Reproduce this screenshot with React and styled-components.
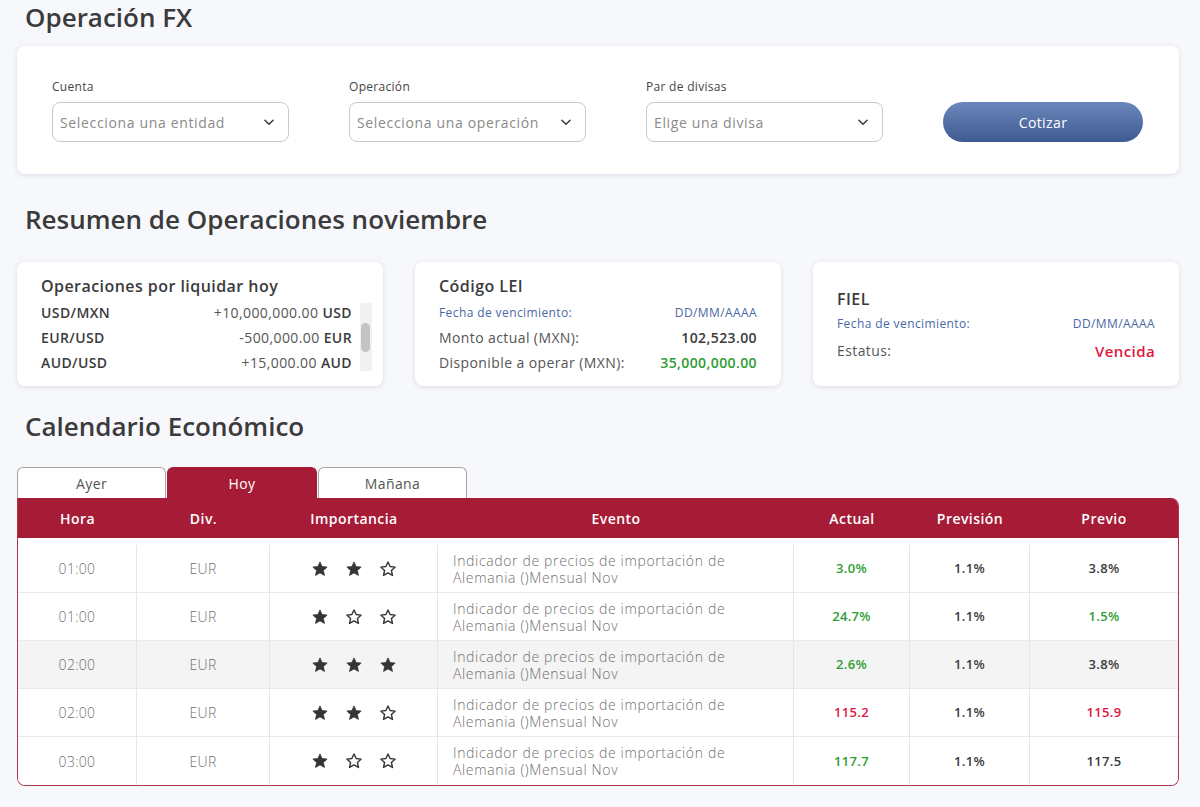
import React from "react";
import styled, { createGlobalStyle } from "styled-components";

const Global = createGlobalStyle`
  html, body { margin: 0; padding: 0; background: #f7f8fc; }
  body { font-family: "Open Sans", "Liberation Sans", sans-serif; color: #3b3b3b; }
  * { box-sizing: border-box; }
`;

const Page = styled.div`
  width: 1200px;
  padding: 0 21px 22px 17px;
`;

const PageTitle = styled.h1`
  margin: ${(p) => p.$mt || 0}px 0 ${(p) => p.$mb || 0}px 8px;
  font-size: 26px;
  line-height: 34px;
  font-weight: 600;
  color: #3b3b3b;
`;

const Card = styled.div`
  background: #fff;
  border-radius: 8px;
  box-shadow: 0 1px 5px rgba(30, 40, 70, 0.13);
`;

const FormCard = styled(Card)`
  margin-top: 12px;
  padding: 33px 35px 32px 35px;
  display: flex;
  align-items: flex-end;
  gap: 60px;
`;

const Field = styled.div`
  display: flex;
  flex-direction: column;
  gap: 7px;
  width: 237px;
`;

const Label = styled.label`
  font-size: 12px;
  line-height: 16px;
  letter-spacing: 0.3px;
  color: #444;
`;

const Select = styled.div`
  height: 40px;
  border: 1px solid #c9c9c9;
  border-radius: 8px;
  display: flex;
  align-items: center;
  justify-content: space-between;
  padding: 0 12px 0 7px;
  font-size: 14px;
  letter-spacing: 0.65px;
  color: #8a8a8a;
  background: #fff;
`;

const Button = styled.button`
  width: 200px;
  height: 40px;
  border: none;
  border-radius: 20px;
  background: linear-gradient(180deg, #6b87bc 0%, #3e5b91 100%);
  color: #fff;
  font-family: inherit;
  font-size: 14px;
  letter-spacing: 0.4px;
`;

const SummaryRow = styled.div`
  display: flex;
  gap: 32px;
`;

const SummaryCard = styled(Card)`
  flex: 1;
  height: 124px;
  padding: ${(p) => (p.$center ? "6px 24px 0 24px" : "14px 24px 12px 24px")};
  display: flex;
  flex-direction: column;
  justify-content: ${(p) => (p.$center ? "center" : "flex-start")};
`;

const CardTitle = styled.div`
  font-size: 16px;
  line-height: 20px;
  font-weight: 600;
  letter-spacing: 0.45px;
  color: #3b3b3b;
  margin-bottom: ${(p) => p.$mb || 4}px;
`;

const ListWrap = styled.div`
  display: flex;
  gap: 8px;
  margin-right: -13px;
`;

const List = styled.div`
  flex: 1;
  display: flex;
  flex-direction: column;
`;

const ListRow = styled.div`
  display: flex;
  justify-content: space-between;
  font-size: 14px;
  line-height: 25px;
  letter-spacing: 0.4px;
`;

const Pair = styled.span`
  font-weight: 600;
  color: #3b3b3b;
`;

const Amount = styled.span`
  color: #555;
  b { font-weight: 600; color: #3b3b3b; }
`;

const Track = styled.div`
  position: relative;
  width: 12px;
  margin-top: 3px;
  height: 68px;
  background: #f1f1f1;
`;

const Thumb = styled.div`
  position: absolute;
  left: 1px;
  top: 20px;
  width: 9px;
  height: 29px;
  border-radius: 5px;
  background: #c3c3c3;
`;

const InfoRow = styled.div`
  display: flex;
  justify-content: space-between;
  align-items: center;
  font-size: ${(p) => (p.$small ? 12 : 14)}px;
  line-height: ${(p) => p.$lh || 25}px;
  letter-spacing: 0.4px;
  color: ${(p) => (p.$small ? "#4a68a6" : "#555")};
`;

const Value = styled.span`
  font-weight: 600;
  font-size: ${(p) => p.$size || 14}px;
  color: ${(p) => p.$color || "#3b3b3b"};
`;

const Tabs = styled.div`
  display: flex;
  gap: 1px;
`;

const Tab = styled.div`
  width: ${(p) => p.$w}px;
  height: 31px;
  display: flex;
  align-items: center;
  justify-content: center;
  font-size: 14px;
  letter-spacing: 0.4px;
  border: 1px solid ${(p) => (p.$active ? "#a61c37" : "#a5a5a5")};
  border-bottom: none;
  border-radius: 6px 6px 0 0;
  background: ${(p) => (p.$active ? "#a61c37" : "#fff")};
  color: ${(p) => (p.$active ? "#fff" : "#555")};
`;

const Table = styled.div`
  border: 1px solid #b3354d;
  border-top: none;
  border-radius: 0 8px 8px 8px;
  overflow: hidden;
  background: #fff;
`;

const cols = "119px 133px 168px 356px 116px 120px 1fr";

const HeaderRow = styled.div`
  display: grid;
  grid-template-columns: ${cols};
  height: 40px;
  align-items: center;
  background: #a61c37;
  color: #fff;
  font-size: 14px;
  font-weight: 600;
  letter-spacing: 0.45px;
  text-align: center;
`;

const Body = styled.div`
  padding-top: 7px;
`;

const Row = styled.div`
  display: grid;
  grid-template-columns: ${cols};
  height: 48px;
  background: ${(p) => (p.$alt ? "#f4f4f4" : "#fff")};
  border-bottom: ${(p) => (p.$last ? "none" : "1px solid #ebebeb")};
`;

const Cell = styled.div`
  display: flex;
  align-items: center;
  justify-content: ${(p) => (p.$left ? "flex-start" : "center")};
  padding-left: ${(p) => (p.$left ? 15 : 0)}px;
  border-right: ${(p) => (p.$end ? "none" : "1px solid #e6e6e6")};
  font-size: ${(p) => (p.$val ? 13 : 14)}px;
  font-weight: ${(p) => (p.$val ? 600 : 300)};
  letter-spacing: ${(p) => (p.$left ? 0.65 : 0.3)}px;
  line-height: 17px;
  color: ${(p) => p.$color || (p.$val ? "#3b3b3b" : "#6f6f6f")};
  gap: 16px;
`;

const StarSvg = styled.svg`
  width: 18px;
  height: 18px;
  display: block;
`;

const Star = ({ filled }) => (
  <StarSvg viewBox="0 0 24 24">
    <path
      d="M12 2.6l2.85 6.15 6.7.7-5 4.55 1.42 6.6L12 17.2l-5.97 3.4 1.42-6.6-5-4.55 6.7-.7z"
      fill={filled ? "#353535" : "none"}
      stroke="#353535"
      strokeWidth={filled ? 1 : 1.9}
      strokeLinejoin="round"
    />
  </StarSvg>
);

const Chevron = () => (
  <svg width="14" height="14" viewBox="0 0 24 24" fill="none" stroke="#3b3b3b" strokeWidth="2.6" strokeLinecap="round" strokeLinejoin="round">
    <path d="M5 9l7 7 7-7" />
  </svg>
);

const GREEN = "#2e9d33";
const RED = "#e2163e";

const rows = [
  { h: "01:00", s: 2, a: "3.0%", ac: GREEN, p: "3.8%" },
  { h: "01:00", s: 1, a: "24.7%", ac: GREEN, p: "1.5%", pc: GREEN },
  { h: "02:00", s: 3, a: "2.6%", ac: GREEN, p: "3.8%", alt: true },
  { h: "02:00", s: 2, a: "115.2", ac: RED, p: "115.9", pc: RED },
  { h: "03:00", s: 1, a: "117.7", ac: GREEN, p: "117.5" },
];

export default function App() {
  return (
    <Page>
      <Global />
      <PageTitle>Operación FX</PageTitle>
      <FormCard>
        <Field>
          <Label>Cuenta</Label>
          <Select>Selecciona una entidad<Chevron /></Select>
        </Field>
        <Field>
          <Label>Operación</Label>
          <Select>Selecciona una operación<Chevron /></Select>
        </Field>
        <Field>
          <Label>Par de divisas</Label>
          <Select>Elige una divisa<Chevron /></Select>
        </Field>
        <Button>Cotizar</Button>
      </FormCard>

      <PageTitle $mt={28} $mb={26}>Resumen de Operaciones noviembre</PageTitle>
      <SummaryRow>
        <SummaryCard>
          <CardTitle>Operaciones por liquidar hoy</CardTitle>
          <ListWrap>
            <List>
              <ListRow><Pair>USD/MXN</Pair><Amount>+10,000,000.00 <b>USD</b></Amount></ListRow>
              <ListRow><Pair>EUR/USD</Pair><Amount>-500,000.00 <b>EUR</b></Amount></ListRow>
              <ListRow><Pair>AUD/USD</Pair><Amount>+15,000.00 <b>AUD</b></Amount></ListRow>
            </List>
            <Track><Thumb /></Track>
          </ListWrap>
        </SummaryCard>
        <SummaryCard>
          <CardTitle>Código LEI</CardTitle>
          <InfoRow $small><span>Fecha de vencimiento:</span><span>DD/MM/AAAA</span></InfoRow>
          <InfoRow><span>Monto actual (MXN):</span><Value>102,523.00</Value></InfoRow>
          <InfoRow><span>Disponible a operar (MXN):</span><Value $color={GREEN}>35,000,000.00</Value></InfoRow>
        </SummaryCard>
        <SummaryCard $center>
          <CardTitle $mb={2}>FIEL</CardTitle>
          <InfoRow $small><span>Fecha de vencimiento:</span><span>DD/MM/AAAA</span></InfoRow>
          <InfoRow $lh={30}><span>Estatus:</span><Value $size={15} $color={RED}>Vencida</Value></InfoRow>
        </SummaryCard>
      </SummaryRow>

      <PageTitle $mt={23} $mb={24}>Calendario Económico</PageTitle>
      <Tabs>
        <Tab $w={149}>Ayer</Tab>
        <Tab $w={150} $active>Hoy</Tab>
        <Tab $w={149}>Mañana</Tab>
      </Tabs>
      <Table>
        <HeaderRow>
          <div>Hora</div>
          <div>Div.</div>
          <div>Importancia</div>
          <div>Evento</div>
          <div>Actual</div>
          <div>Previsión</div>
          <div>Previo</div>
        </HeaderRow>
        <Body>
          {rows.map((r, i) => (
            <Row key={i} $alt={r.alt} $last={i === rows.length - 1}>
              <Cell>{r.h}</Cell>
              <Cell>EUR</Cell>
              <Cell>
                {[0, 1, 2].map((k) => (
                  <Star key={k} filled={k < r.s} />
                ))}
              </Cell>
              <Cell $left>Indicador de precios de importación de<br />Alemania ()Mensual Nov</Cell>
              <Cell $val $color={r.ac}>{r.a}</Cell>
              <Cell $val>1.1%</Cell>
              <Cell $val $end $color={r.pc}>{r.p}</Cell>
            </Row>
          ))}
        </Body>
      </Table>
    </Page>
  );
}
